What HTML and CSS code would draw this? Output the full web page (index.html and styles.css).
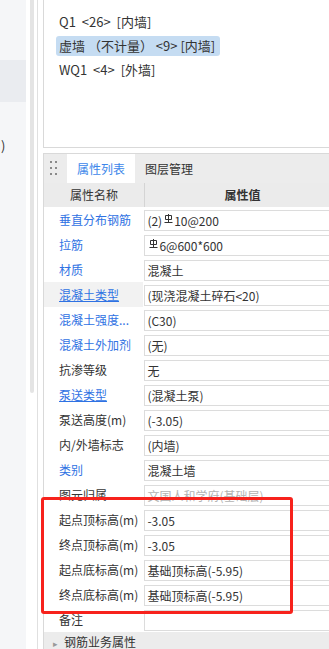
FILE: index.html
```html
<!DOCTYPE html>
<html lang="zh-CN">
<head>
  <meta charset="UTF-8">
  <title>属性列表</title>
  <link rel="stylesheet" href="styles.css">
</head>
<body>
  <div class="app">
    <aside class="side">
      <div class="side-band"></div>
      <div class="side-text">)</div>
    </aside>
    <div class="splitter">
      <div class="thumb"></div>
      <div class="split-line"></div>
    </div>
    <main class="main">
      <div class="list-panel">
        <div class="item wide">Q1 &lt;26&gt; [内墙]</div>
        <div class="item selected">虚墙 （不计量） &lt;9&gt; [内墙]</div>
        <div class="item wide">WQ1 &lt;4&gt; [外墙]</div>
      </div>

      <div class="prop-panel">
        <div class="tabs">
          <div class="grip"><i></i><i></i><i></i><i></i><i></i><i></i></div>
          <div class="tab active">属性列表</div>
          <div class="tab">图层管理</div>
        </div>
        <div class="head">
          <div class="c1">属性名称</div>
          <div class="c2">属性值</div>
        </div>

        <div class="row"><div class="c1 link">垂直分布钢筋</div><div class="c2"><div class="val">(2)<svg class="bar" width="9" height="9" viewBox="0 0 9 9"><path d="M1.5 1.5h6v4h-6z M4.5 0v8 M0.5 8.5h8" fill="none" stroke="#333" stroke-width="1"/></svg>10@200</div></div></div>
        <div class="row"><div class="c1 link">拉筋</div><div class="c2"><div class="val"><svg class="bar" width="9" height="9" viewBox="0 0 9 9"><path d="M1.5 1.5h6v4h-6z M4.5 0v8 M0.5 8.5h8" fill="none" stroke="#333" stroke-width="1"/></svg>6@600*600</div></div></div>
        <div class="row"><div class="c1 link">材质</div><div class="c2"><div class="val">混凝土</div></div></div>
        <div class="row hover"><div class="c1 link under">混凝土类型</div><div class="c2"><div class="val">(现浇混凝土碎石&lt;20)</div></div></div>
        <div class="row"><div class="c1 link">混凝土强度...</div><div class="c2"><div class="val">(C30)</div></div></div>
        <div class="row"><div class="c1 link">混凝土外加剂</div><div class="c2"><div class="val">(无)</div></div></div>
        <div class="row"><div class="c1">抗渗等级</div><div class="c2"><div class="val">无</div></div></div>
        <div class="row"><div class="c1 link under">泵送类型</div><div class="c2"><div class="val">(混凝土泵)</div></div></div>
        <div class="row"><div class="c1">泵送高度(m)</div><div class="c2"><div class="val">(-3.05)</div></div></div>
        <div class="row"><div class="c1">内/外墙标志</div><div class="c2"><div class="val">(内墙)</div></div></div>
        <div class="row"><div class="c1 link">类别</div><div class="c2"><div class="val">混凝土墙</div></div></div>
        <div class="row"><div class="c1">图元归属</div><div class="c2"><div class="val dim">文国人和学府(基础层)</div></div></div>
        <div class="row"><div class="c1">起点顶标高(m)</div><div class="c2"><div class="val">-3.05</div></div></div>
        <div class="row"><div class="c1">终点顶标高(m)</div><div class="c2"><div class="val">-3.05</div></div></div>
        <div class="row"><div class="c1">起点底标高(m)</div><div class="c2"><div class="val">基础顶标高(-5.95)</div></div></div>
        <div class="row"><div class="c1">终点底标高(m)</div><div class="c2"><div class="val">基础顶标高(-5.95)</div></div></div>
        <div class="row"><div class="c1">备注</div><div class="c2"><div class="val"></div></div></div>
        <div class="group"><span class="tri">&#9656;</span>钢筋业务属性</div>
      </div>
    </main>
    <div class="mark"></div>
  </div>
</body>
</html>
```

FILE: styles.css
```css
body {
  margin: 0;
  background: #fff;
  font-family: "Noto Sans CJK SC", "Noto Sans", sans-serif;
  font-size: 12px;
  color: #333;
  overflow: hidden;
}
.app {
  position: relative;
  display: flex;
  width: 329px;
  height: 649px;
  overflow: hidden;
}

/* left tree panel */
.side {
  width: 26px;
  flex: none;
  background: #f5f6f8;
  overflow: hidden;
}
.side-band { height: 42px; margin-top: 60px; background: #eaecf0; }
.side-text { margin: 36px 0 0 1px; font-size: 13px; line-height: 16px; white-space: nowrap; }

.splitter {
  width: 17px;
  flex: none;
  display: flex;
  padding-left: 4px;
  box-sizing: border-box;
}
.thumb { width: 4px; height: 393px; background: #e4e4e4; border-radius: 0 0 2px 2px; }
.split-line { width: 1px; margin-left: 3px; background: #e0e0e0; }

.main {
  width: 300px;
  flex: none;
  display: flex;
  flex-direction: column;
}

/* component list */
.list-panel {
  flex: none;
  height: 148px;
  box-sizing: border-box;
  border-left: 1px solid #d9d9d9;
  border-bottom: 1px solid #d9d9d9;
  padding: 12px 0 0 12px;
  display: flex;
  flex-direction: column;
  align-items: flex-start;
  gap: 4px;
}
.item {
  height: 20px;
  line-height: 20px;
  padding: 0 5px 0 3px;
  font-size: 13px;
  white-space: pre;
  border-radius: 3px;
}
.item.wide { word-spacing: 3px; }
.item.selected { background: #c5dcf2; }

/* property panel */
.prop-panel {
  flex: none;
  margin-top: 5px;
  border-top: 1px solid #d9d9d9;
  border-left: 1px solid #d9d9d9;
}
.tabs {
  height: 29px;
  display: flex;
  background: #ececec;
}
.grip {
  width: 23px;
  display: grid;
  grid-template-columns: 2px 2px;
  grid-template-rows: repeat(3, 2px);
  gap: 4px 3px;
  padding: 7px 0 0 6px;
  box-sizing: border-box;
}
.grip i { background: #8a8a8a; }
.tab {
  padding: 0 10px;
  line-height: 29px;
  white-space: nowrap;
}
.tab.active { background: #fff; color: #3d87ea; }

.head, .row { display: flex; }
.head {
  height: 24px;
  line-height: 24px;
  background: #ebebeb;
}
.head .c1 { width: 100px; border-right: 1px solid #d4d4d4; text-align: center; }
.head .c2 { width: 195px; text-align: center; font-weight: bold; }

.row { height: 25px; }
.row .c1 {
  width: 100px;
  padding-left: 15px;
  box-sizing: border-box;
  line-height: 25px;
  white-space: nowrap;
}
.row.hover .c1 { background: #f2f2f2; }
.row .c2 { width: 200px; padding: 3px 0 1px 1px; }
.link { color: #2f72e3; }
.c1.under { text-decoration: underline; }
.val {
  height: 19px;
  line-height: 19px;
  border: 1px solid #dcdcdc;
  padding-left: 2px;
  white-space: nowrap;
}
.val.dim { color: #b3b3b3; }
.bar { vertical-align: 3px; margin: 0 1px 0 2px; }

.group {
  height: 25px;
  line-height: 19px;
  background: #ececec;
  padding-left: 9px;
  white-space: nowrap;
}
.tri { color: #999; font-size: 9px; margin-right: 6px; }

/* annotation over the table */
.mark {
  position: absolute;
  left: 41px;
  top: 497px;
  width: 246px;
  height: 111px;
  border: 3px solid #f7221c;
  border-radius: 3px;
}
```
